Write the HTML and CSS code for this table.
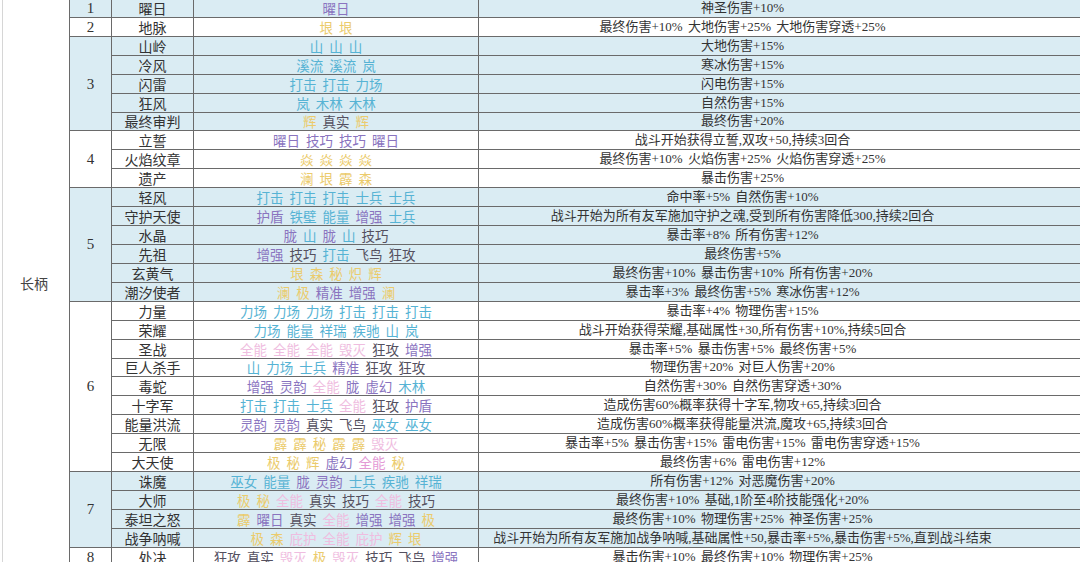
FILE: index.html
```html
<!DOCTYPE html>
<html lang="zh">
<head>
<meta charset="utf-8">
<title>长柄</title>
<link rel="stylesheet" href="styles.css">
</head>
<body>
<div class="sheet">
<table class="grid">
<colgroup><col class="w-cat"><col class="w-num"><col class="w-name"><col class="w-words"><col class="w-eff"></colgroup>
<tbody>
<tr class="blue gs"><td class="cat" rowspan="30">长柄</td><td class="num">1</td><td class="name">曜日</td><td><div class="words"><span class="p">曜日</span></div></td><td class="eff">神圣伤害+10%</td></tr>
<tr class="white gs"><td class="num">2</td><td class="name">地脉</td><td><div class="words"><span class="y">垠</span><span class="y">垠</span></div></td><td class="eff">最终伤害+10% 大地伤害+25% 大地伤害穿透+25%</td></tr>

<tr class="blue gs"><td class="num" rowspan="5">3</td><td class="name">山岭</td><td><div class="words"><span class="c">山</span><span class="c">山</span><span class="c">山</span></div></td><td class="eff">大地伤害+15%</td></tr>
<tr class="blue"><td class="name">冷风</td><td><div class="words"><span class="c">溪流</span><span class="c">溪流</span><span class="c">岚</span></div></td><td class="eff">寒冰伤害+15%</td></tr>
<tr class="blue"><td class="name">闪雷</td><td><div class="words"><span class="c">打击</span><span class="c">打击</span><span class="c">力场</span></div></td><td class="eff">闪电伤害+15%</td></tr>
<tr class="blue"><td class="name">狂风</td><td><div class="words"><span class="c">岚</span><span class="c">木林</span><span class="c">木林</span></div></td><td class="eff">自然伤害+15%</td></tr>
<tr class="blue"><td class="name">最终审判</td><td><div class="words"><span class="y">辉</span><span class="d">真实</span><span class="y">辉</span></div></td><td class="eff">最终伤害+20%</td></tr>

<tr class="white gs"><td class="num" rowspan="3">4</td><td class="name">立誓</td><td><div class="words"><span class="p">曜日</span><span class="p">技巧</span><span class="p">技巧</span><span class="p">曜日</span></div></td><td class="eff">战斗开始获得立誓,双攻+50,持续3回合</td></tr>
<tr class="white"><td class="name">火焰纹章</td><td><div class="words"><span class="y">焱</span><span class="y">焱</span><span class="y">焱</span><span class="y">焱</span></div></td><td class="eff">最终伤害+10% 火焰伤害+25% 火焰伤害穿透+25%</td></tr>
<tr class="white"><td class="name">遗产</td><td><div class="words"><span class="y">澜</span><span class="y">垠</span><span class="y">霹</span><span class="y">森</span></div></td><td class="eff">暴击伤害+25%</td></tr>

<tr class="blue gs"><td class="num" rowspan="6">5</td><td class="name">轻风</td><td><div class="words"><span class="c">打击</span><span class="c">打击</span><span class="c">打击</span><span class="c">士兵</span><span class="c">士兵</span></div></td><td class="eff">命中率+5% 自然伤害+10%</td></tr>
<tr class="blue"><td class="name">守护天使</td><td><div class="words"><span class="p">护盾</span><span class="c">铁壁</span><span class="c">能量</span><span class="p">增强</span><span class="c">士兵</span></div></td><td class="eff">战斗开始为所有友军施加守护之魂,受到所有伤害降低300,持续2回合</td></tr>
<tr class="blue"><td class="name">水晶</td><td><div class="words"><span class="p">胧</span><span class="c">山</span><span class="p">胧</span><span class="c">山</span><span class="d">技巧</span></div></td><td class="eff">暴击率+8% 所有伤害+12%</td></tr>
<tr class="blue"><td class="name">先祖</td><td><div class="words"><span class="p">增强</span><span class="d">技巧</span><span class="c">打击</span><span class="d">飞鸟</span><span class="d">狂攻</span></div></td><td class="eff">最终伤害+5%</td></tr>
<tr class="blue"><td class="name">玄黄气</td><td><div class="words"><span class="y">垠</span><span class="y">森</span><span class="y">秘</span><span class="y">炽</span><span class="y">辉</span></div></td><td class="eff">最终伤害+10% 暴击伤害+10% 所有伤害+20%</td></tr>
<tr class="blue"><td class="name">潮汐使者</td><td><div class="words"><span class="y">澜</span><span class="y">极</span><span class="p">精准</span><span class="p">增强</span><span class="y">澜</span></div></td><td class="eff">暴击率+3% 最终伤害+5% 寒冰伤害+12%</td></tr>

<tr class="white gs"><td class="num" rowspan="9">6</td><td class="name">力量</td><td><div class="words"><span class="c">力场</span><span class="c">力场</span><span class="c">力场</span><span class="c">打击</span><span class="c">打击</span><span class="c">打击</span></div></td><td class="eff">暴击率+4% 物理伤害+15%</td></tr>
<tr class="white"><td class="name">荣耀</td><td><div class="words"><span class="c">力场</span><span class="c">能量</span><span class="c">祥瑞</span><span class="c">疾驰</span><span class="c">山</span><span class="c">岚</span></div></td><td class="eff">战斗开始获得荣耀,基础属性+30,所有伤害+10%,持续5回合</td></tr>
<tr class="white"><td class="name">圣战</td><td><div class="words"><span class="k">全能</span><span class="k">全能</span><span class="k">全能</span><span class="k">毁灭</span><span class="d">狂攻</span><span class="p">增强</span></div></td><td class="eff">暴击率+5% 暴击伤害+5% 最终伤害+5%</td></tr>
<tr class="white"><td class="name">巨人杀手</td><td><div class="words"><span class="c">山</span><span class="c">力场</span><span class="c">士兵</span><span class="p">精准</span><span class="d">狂攻</span><span class="d">狂攻</span></div></td><td class="eff">物理伤害+20% 对巨人伤害+20%</td></tr>
<tr class="white"><td class="name">毒蛇</td><td><div class="words"><span class="p">增强</span><span class="p">灵韵</span><span class="k">全能</span><span class="p">胧</span><span class="p">虚幻</span><span class="c">木林</span></div></td><td class="eff">自然伤害+30% 自然伤害穿透+30%</td></tr>
<tr class="white"><td class="name">十字军</td><td><div class="words"><span class="c">打击</span><span class="c">打击</span><span class="c">士兵</span><span class="k">全能</span><span class="d">狂攻</span><span class="p">护盾</span></div></td><td class="eff">造成伤害60%概率获得十字军,物攻+65,持续3回合</td></tr>
<tr class="white"><td class="name">能量洪流</td><td><div class="words"><span class="p">灵韵</span><span class="p">灵韵</span><span class="d">真实</span><span class="d">飞鸟</span><span class="c">巫女</span><span class="c">巫女</span></div></td><td class="eff">造成伤害60%概率获得能量洪流,魔攻+65,持续3回合</td></tr>
<tr class="white"><td class="name">无限</td><td><div class="words"><span class="y">霹</span><span class="y">霹</span><span class="y">秘</span><span class="y">霹</span><span class="y">霹</span><span class="k">毁灭</span></div></td><td class="eff">暴击率+5% 暴击伤害+15% 雷电伤害+15% 雷电伤害穿透+15%</td></tr>
<tr class="white"><td class="name">大天使</td><td><div class="words"><span class="y">极</span><span class="y">秘</span><span class="y">辉</span><span class="p">虚幻</span><span class="m">全能</span><span class="y">秘</span></div></td><td class="eff">最终伤害+6% 雷电伤害+12%</td></tr>

<tr class="blue gs"><td class="num" rowspan="4">7</td><td class="name">诛魔</td><td><div class="words"><span class="c">巫女</span><span class="c">能量</span><span class="p">胧</span><span class="p">灵韵</span><span class="c">士兵</span><span class="c">疾驰</span><span class="c">祥瑞</span></div></td><td class="eff">所有伤害+12% 对恶魔伤害+20%</td></tr>
<tr class="blue"><td class="name">大师</td><td><div class="words"><span class="y">极</span><span class="y">秘</span><span class="k">全能</span><span class="d">真实</span><span class="d">技巧</span><span class="k">全能</span><span class="d">技巧</span></div></td><td class="eff">最终伤害+10% 基础,1阶至4阶技能强化+20%</td></tr>
<tr class="blue"><td class="name">泰坦之怒</td><td><div class="words"><span class="y">霹</span><span class="p">曜日</span><span class="d">真实</span><span class="k">全能</span><span class="p">增强</span><span class="p">增强</span><span class="y">极</span></div></td><td class="eff">最终伤害+10% 物理伤害+25% 神圣伤害+25%</td></tr>
<tr class="blue"><td class="name">战争呐喊</td><td><div class="words"><span class="y">极</span><span class="y">森</span><span class="k">庇护</span><span class="k">全能</span><span class="k">庇护</span><span class="y">辉</span><span class="y">垠</span></div></td><td class="eff">战斗开始为所有友军施加战争呐喊,基础属性+50,暴击率+5%,暴击伤害+5%,直到战斗结束</td></tr>

<tr class="white gs"><td class="num">8</td><td class="name">处决</td><td><div class="words"><span class="d">狂攻</span><span class="d">真实</span><span class="k">毁灭</span><span class="y">极</span><span class="k">毁灭</span><span class="d">技巧</span><span class="d">飞鸟</span><span class="p">增强</span></div></td><td class="eff">暴击伤害+10% 最终伤害+10% 物理伤害+25%</td></tr>
</tbody>
</table>
</div>
</body>
</html>
```

FILE: styles.css
```css
html, body {
  margin: 0;
  padding: 0;
  background: #ffffff;
  overflow: hidden;
}

.sheet {
  width: 1080px;
  height: 562px;
  overflow: hidden;
  padding-left: 2px;
  box-sizing: border-box;
}

.grid {
  margin-top: -2px;
  border-collapse: collapse;
  table-layout: fixed;
  width: 1090px;
  font-family: "Liberation Serif", "Noto Sans CJK SC", serif;
  color: #333333;
}

.w-cat { width: 67px; }
.w-num { width: 42px; }
.w-name { width: 82px; }
.w-words { width: 285px; }
.w-eff { width: 614px; }

.grid tr {
  height: 18.93px;
}

.grid td {
  padding: 0;
  border: 1px solid #6a6a6a;
  text-align: center;
  vertical-align: middle;
  line-height: 16px;
  white-space: nowrap;
  overflow: hidden;
}

.grid tr.gs > td {
  border-top: 1px solid #4e4e4e;
}

.blue > td { background: #daecf3; }
.white > td { background: #ffffff; }

.grid td.cat {
  background: #ffffff;
  border-top: none;
  border-bottom: none;
  border-left: 1px solid #d6d6d6;
  border-right: 1px solid #6a6a6a;
  font-family: "Noto Sans CJK SC", sans-serif;
  font-size: 14px;
  color: #444;
  padding-right: 4px;
}

.num {
  font-size: 15px;
  color: #333;
}

.name {
  font-family: "Noto Sans CJK SC", sans-serif;
  font-size: 14px;
  color: #333;
}

.words {
  display: flex;
  justify-content: center;
  gap: 6px;
  font-family: "Noto Sans CJK SC", sans-serif;
  font-size: 13.5px;
}

.eff {
  font-size: 13px;
  word-spacing: 2px;
  padding-right: 86px !important;
  color: #333;
}

.c { color: #56b3d4; }
.p { color: #8a74bf; }
.d { color: #54505f; }
.k { color: #efbde0; }
.m { color: #e49ad6; }
.y { color: #ebcb6c; }
```
